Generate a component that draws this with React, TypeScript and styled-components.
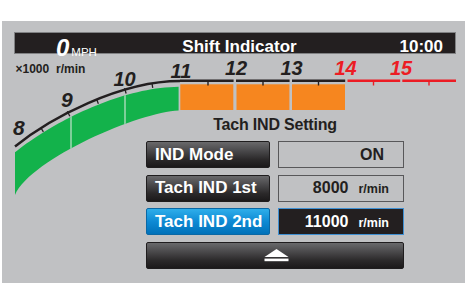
import React from "react";
import styled, { createGlobalStyle, css } from "styled-components";

const Global = createGlobalStyle`
  html, body { margin: 0; padding: 0; background: #fff; }
  body { font-family: "Liberation Sans", Arial, Helvetica, sans-serif; }
`;

const Panel = styled.div`
  margin: 21px 0 0 2px;
  width: 463px;
  height: 262px;
  background: #c0c1c3;
  display: flex;
  flex-direction: column;
`;

const TopBar = styled.div`
  margin: 11px 9px 0 12px;
  height: 22px;
  box-sizing: border-box;
  border: 1px solid #808183;
  background: #231f20;
  color: #fff;
  display: grid;
  grid-template-columns: 1fr auto 1fr;
  align-items: center;
`;

const Speed = styled.div`
  display: flex;
  align-items: baseline;
  padding-left: 41px;
  line-height: 1;
  margin-top: 3px;
`;

const SpeedValue = styled.span`
  font-size: 24px;
  font-weight: bold;
  font-style: italic;
`;

const SpeedUnit = styled.span`
  font-size: 11.5px;
  margin-left: 2px;
`;

const BarTitle = styled.div`
  font-size: 17px;
  font-weight: bold;
  line-height: 1;
  margin-left: 9px;
`;

const Clock = styled.div`
  justify-self: end;
  padding-right: 12px;
  font-size: 17px;
  font-weight: bold;
  line-height: 1;
`;

const Body = styled.div`
  flex: 1;
  display: grid;
  grid-template-areas: "stack";
  & > * {
    grid-area: stack;
  }
`;

const GaugeSvg = styled.svg`
  display: block;
  width: 463px;
  height: 229px;
`;

const Settings = styled.div`
  justify-self: start;
  align-self: start;
  margin-left: 144px;
  padding-top: 61px;
  width: 258px;
  display: flex;
  flex-direction: column;
`;

const SettingsTitle = styled.div`
  font-size: 16px;
  font-weight: bold;
  line-height: 20px;
  text-align: center;
  color: #231f20;
  letter-spacing: -0.2px;
  margin-bottom: 6px;
`;

const SettingsGrid = styled.div`
  display: grid;
  grid-template-columns: 124px 126px;
  column-gap: 8px;
  row-gap: 6.5px;
  grid-auto-rows: 27px;
`;

const darkFace = css`
  background: linear-gradient(
    to bottom,
    #69696b 0%,
    #4a494b 35%,
    #2b292a 70%,
    #1b191a 100%
  );
  border: 1px solid #1f1d1e;
`;

const blueFace = css`
  background: linear-gradient(to bottom, #2eaeea 0%, #0e8ad4 50%, #0071b9 100%);
  border: 1px solid #0a68a5;
`;

const MenuButton = styled.div<{ $active?: boolean }>`
  box-sizing: border-box;
  border-radius: 2px;
  ${(p) => (p.$active ? blueFace : darkFace)}
  color: #fff;
  font-size: 17px;
  font-weight: bold;
  display: flex;
  align-items: center;
  padding-left: 8px;
  white-space: nowrap;
`;

const ValueBox = styled.div<{ $selected?: boolean; $pad: number }>`
  box-sizing: border-box;
  border: 1px solid ${(p) => (p.$selected ? "#3f90d3" : "#58585a")};
  background: ${(p) => (p.$selected ? "#231f20" : "transparent")};
  color: ${(p) => (p.$selected ? "#fff" : "#231f20")};
  display: flex;
  align-items: center;
  justify-content: flex-end;
  padding-right: ${(p) => p.$pad}px;
`;

const ValueText = styled.div`
  display: flex;
  align-items: baseline;
  white-space: nowrap;
`;

const Num = styled.span`
  font-size: 16px;
  font-weight: bold;
`;

const Unit = styled.span`
  font-size: 12.5px;
  font-weight: bold;
  margin-left: 10px;
`;

const BackButton = styled.div`
  grid-column: 1 / -1;
  box-sizing: border-box;
  border-radius: 2px;
  ${darkFace}
  display: flex;
  align-items: center;
  justify-content: center;
  padding-left: 3px;
`;

/* ---------- gauge geometry (page coordinates) ---------- */

type P = [number, number];
const B0: P = [15, 146.5];
const B1: P = [50, 118];
const B2: P = [120, 81];
const B3: P = [180, 81];

const bez = (t: number): P => {
  const u = 1 - t;
  const a = u * u * u;
  const b = 3 * u * u * t;
  const c = 3 * u * t * t;
  const d = t * t * t;
  return [
    a * B0[0] + b * B1[0] + c * B2[0] + d * B3[0],
    a * B0[1] + b * B1[1] + c * B2[1] + d * B3[1],
  ];
};

const bezD = (t: number): P => {
  const u = 1 - t;
  return [
    3 * u * u * (B1[0] - B0[0]) + 6 * u * t * (B2[0] - B1[0]) + 3 * t * t * (B3[0] - B2[0]),
    3 * u * u * (B1[1] - B0[1]) + 6 * u * t * (B2[1] - B1[1]) + 3 * t * t * (B3[1] - B2[1]),
  ];
};

const tAtX = (x: number) => {
  let lo = 0;
  let hi = 1;
  for (let i = 0; i < 40; i++) {
    const m = (lo + hi) / 2;
    if (bez(m)[0] < x) lo = m;
    else hi = m;
  }
  return (lo + hi) / 2;
};

const tick = (x: number, outer: number, inner: number) => {
  const t = tAtX(x);
  const [px, py] = bez(t);
  const [dx, dy] = bezD(t);
  const len = Math.hypot(dx, dy);
  const nx = -dy / len;
  const ny = dx / len;
  return {
    x1: px - nx * outer,
    y1: py - ny * outer,
    x2: px + nx * inner,
    y2: py + ny * inner,
  };
};

const f = (n: number) => n.toFixed(2);

const arcD = `M ${B0.join(" ")} C ${B1.join(" ")}, ${B2.join(" ")}, ${B3.join(" ")}`;

const GREEN_END = 178.6;
const greenTop = (() => {
  const tEnd = tAtX(GREEN_END);
  const pts: string[] = [];
  for (let i = 0; i <= 40; i++) {
    const [x, y] = bez((tEnd * i) / 40);
    pts.push(`${f(x)} ${f(y + 5.8)}`);
  }
  return pts;
})();
const greenD = `M ${greenTop.join(" L ")} L ${GREEN_END} 110.6 C 140 112, 32 158, 15 195 Z`;

const majorTicks = [68, 125];
const minorTicks = [41, 96.7, 152];

const barSegments = [
  { x1: 180, x2: 233.6, red: false },
  { x1: 236, x2: 289.6, red: false },
  { x1: 292, x2: 345.2, red: false },
  { x1: 347.5, x2: 400.2, red: true },
  { x1: 402.3, x2: 456, red: true },
];
const barTicks = [
  { x: 208, red: false },
  { x: 263, red: false },
  { x: 318.5, red: false },
  { x: 373.5, red: true },
  { x: 429, red: true },
];

const orangeBlocks = [
  [180.3, 233.3],
  [236.5, 289.4],
  [292, 345],
];

const labels = [
  { t: "8", x: 13, y: 135, s: 21, red: false },
  { t: "9", x: 61, y: 107, s: 21, red: false },
  { t: "10", x: 113.5, y: 86, s: 20, red: false },
  { t: "11", x: 170.5, y: 77.5, s: 20, red: false },
  { t: "12", x: 225, y: 75, s: 20, red: false },
  { t: "13", x: 280.5, y: 75, s: 20, red: false },
  { t: "14", x: 334.5, y: 75, s: 20, red: true },
  { t: "15", x: 390, y: 75, s: 20, red: true },
];

const INK = "#231f20";
const RED = "#ec1c24";
const GREEN = "#13b24b";
const ORANGE = "#f6861f";
const FONT = "Liberation Sans, Arial, sans-serif";

function Gauge() {
  return (
    <GaugeSvg viewBox="2 54 463 229">
      <defs>
        <clipPath id="greenClip">
          <path d={greenD} />
        </clipPath>
      </defs>
      <text x={15.5} y={72.5} fontFamily={FONT} fontWeight="bold" fontSize={12} fill={INK} wordSpacing={3.5}>
        ×1000 r/min
      </text>
      <path d={greenD} fill={GREEN} />
      <g clipPath="url(#greenClip)">
        <line x1={71} y1={60} x2={71} y2={200} stroke="#d6e8da" strokeWidth={1.1} />
        <line x1={125} y1={60} x2={125} y2={200} stroke="#d6e8da" strokeWidth={1.1} />
      </g>
      {orangeBlocks.map(([a, b]) => (
        <rect key={a} x={a} y={84.3} width={b - a} height={25.7} fill={ORANGE} />
      ))}
      <path d={arcD} stroke={INK} strokeWidth={2.4} fill="none" />
      {majorTicks.map((x) => {
        const l = tick(x, 1.5, 4);
        return <line key={x} x1={l.x1} y1={l.y1} x2={l.x2} y2={l.y2} stroke={INK} strokeWidth={1.3} />;
      })}
      {minorTicks.map((x) => {
        const l = tick(x, 0, 4.5);
        return <line key={x} x1={l.x1} y1={l.y1} x2={l.x2} y2={l.y2} stroke={INK} strokeWidth={1.3} />;
      })}
      {barSegments.map((s) => (
        <line
          key={s.x1}
          x1={s.x1}
          y1={80.8}
          x2={s.x2}
          y2={80.8}
          stroke={s.red ? RED : INK}
          strokeWidth={2.4}
        />
      ))}
      {barTicks.map((t) => (
        <line
          key={t.x}
          x1={t.x}
          y1={80.8}
          x2={t.x}
          y2={85.5}
          stroke={t.red ? RED : INK}
          strokeWidth={1.4}
        />
      ))}
      {labels.map((l) => (
        <text
          key={l.t}
          x={l.x}
          y={l.y}
          fontFamily={FONT}
          fontWeight="bold"
          fontStyle="italic"
          fontSize={l.s}
          fill={l.red ? RED : INK}
        >
          {l.t}
        </text>
      ))}
    </GaugeSvg>
  );
}

function EjectIcon() {
  return (
    <svg width="25" height="13" viewBox="0 0 25 13">
      <polygon points="12.5,0 24.5,8 0.5,8" fill="#fff" />
      <rect x="0.5" y="9.6" width="24" height="2.6" fill="#fff" />
    </svg>
  );
}

const rows = [
  { label: "IND Mode", value: "ON", unit: "", active: false },
  { label: "Tach IND 1st", value: "8000", unit: "r/min", active: false },
  { label: "Tach IND 2nd", value: "11000", unit: "r/min", active: true },
];

export default function App() {
  return (
    <>
      <Global />
      <Panel>
        <TopBar>
          <Speed>
            <SpeedValue>0</SpeedValue>
            <SpeedUnit>MPH</SpeedUnit>
          </Speed>
          <BarTitle>Shift Indicator</BarTitle>
          <Clock>10:00</Clock>
        </TopBar>
        <Body>
          <Gauge />
          <Settings>
            <SettingsTitle>Tach IND Setting</SettingsTitle>
            <SettingsGrid>
              {rows.map((r) => (
                <React.Fragment key={r.label}>
                  <MenuButton $active={r.active}>{r.label}</MenuButton>
                  <ValueBox $selected={r.active} $pad={r.unit ? 14 : 19}>
                    <ValueText>
                      <Num>{r.value}</Num>
                      {r.unit && <Unit>{r.unit}</Unit>}
                    </ValueText>
                  </ValueBox>
                </React.Fragment>
              ))}
              <BackButton>
                <EjectIcon />
              </BackButton>
            </SettingsGrid>
          </Settings>
        </Body>
      </Panel>
    </>
  );
}
